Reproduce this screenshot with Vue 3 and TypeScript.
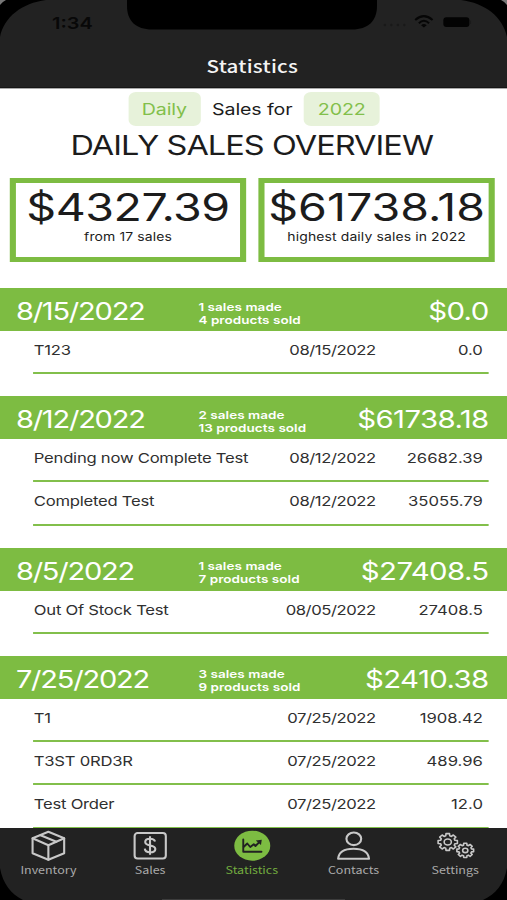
<script setup lang="ts">
interface Sale { name: string; date: string; value: string }
interface Day { date: string; sales: number; products: number; total: string; rows: Sale[] }

const days: Day[] = [
  { date: '8/15/2022', sales: 1, products: 4, total: '$0.0', rows: [{ name: 'T123', date: '08/15/2022', value: '0.0' }] },
  {
    date: '8/12/2022', sales: 2, products: 13, total: '$61738.18',
    rows: [
      { name: 'Pending now Complete Test', date: '08/12/2022', value: '26682.39' },
      { name: 'Completed Test', date: '08/12/2022', value: '35055.79' },
    ],
  },
  { date: '8/5/2022', sales: 1, products: 7, total: '$27408.5', rows: [{ name: 'Out Of Stock Test', date: '08/05/2022', value: '27408.5' }] },
  {
    date: '7/25/2022', sales: 3, products: 9, total: '$2410.38',
    rows: [
      { name: 'T1', date: '07/25/2022', value: '1908.42' },
      { name: 'T3ST 0RD3R', date: '07/25/2022', value: '489.96' },
      { name: 'Test Order', date: '07/25/2022', value: '12.0' },
    ],
  },
]

function gear(cx: number, cy: number, rx: number, ry: number): string {
  const teeth = 8
  const pts: string[] = []
  for (let i = 0; i < teeth; i++) {
    const base = (i * 2 * Math.PI) / teeth
    const steps: [number, number][] = [[-0.27, 0.76], [-0.18, 1], [0.18, 1], [0.27, 0.76]]
    for (const [da, r] of steps) {
      pts.push(`${(cx + Math.cos(base + da) * rx * r).toFixed(2)} ${(cy + Math.sin(base + da) * ry * r).toFixed(2)}`)
    }
  }
  return `M${pts.join('L')}Z`
}
const bigGear = gear(22.8, 14, 9.8, 8.5)
const smallGear = gear(40.3, 22.4, 8.5, 7.2)
</script>

<template>
  <div class="viewport">
    <div class="phone">
      <header class="header">
        <div class="status">
          <span class="clock">1:34</span>
          <svg class="status-icons" width="73.5" height="20" viewBox="0 0 90 20" preserveAspectRatio="none">
            <g fill="#191919">
              <circle cx="4" cy="13" r="1.2" /><circle cx="10.5" cy="13" r="1.2" /><circle cx="17" cy="13" r="1.2" /><circle cx="23.5" cy="13" r="1.2" />
            </g>
            <g fill="none" stroke="#060606" stroke-width="2">
              <path d="M34.3 8Q43 .2 51.700 8" /><path d="M38 11.200Q43 6.400 48.200 11.200" />
            </g>
            <path d="M40.200 13.200Q43 11 45.800 13.200L43 15.600Z" fill="#060606" />
            <rect x="62.500" y="5.300" width="26" height="9.600" rx="3" fill="#030303" />
            <path d="M89.700 8.500v3.500" stroke="#1a1a1a" />
          </svg>
        </div>
        <h1 class="screen-title">Statistics</h1>
      </header>

      <main class="content">
        <div class="filters">
          <button class="pill daily">Daily</button>
          <span class="between">Sales for</span>
          <button class="pill year">2022</button>
        </div>
        <h2 class="title">DAILY SALES OVERVIEW</h2>
        <div class="cards">
          <section class="card">
            <strong class="amount first">$4327.39</strong>
            <span class="note">from 17 sales</span>
          </section>
          <section class="card">
            <strong class="amount">$61738.18</strong>
            <span class="note">highest daily sales in 2022</span>
          </section>
        </div>
        <section v-for="d in days" :key="d.date" class="day">
          <div class="band">
            <span class="day-date">{{ d.date }}</span>
            <span class="counts">{{ d.sales }} sales made<br>{{ d.products }} products sold</span>
            <span class="total">{{ d.total }}</span>
          </div>
          <div v-for="r in d.rows" :key="r.name" class="row">
            <span class="name">{{ r.name }}</span>
            <span class="date">{{ r.date }}</span>
            <span class="value">{{ r.value }}</span>
          </div>
        </section>
      </main>

      <nav class="tabs">
        <div class="tab">
          <svg class="icon" viewBox="0 0 60 34" preserveAspectRatio="none">
            <g fill="none" stroke="#c8c8c8" stroke-width="2.100" stroke-linejoin="round" stroke-linecap="round">
              <path d="M30 3.800L45.800 10.300V25.300L30 31.800L14.200 25.300V10.300Z" />
              <path d="M14.200 10.300L30 17.200L45.800 10.300M30 17.200V31.800" />
              <path d="M22.200 7.200L38 13.700" />
            </g>
          </svg>
          <span class="label">Inventory</span>
        </div>
        <div class="tab">
          <svg class="icon" viewBox="0 0 60 34" preserveAspectRatio="none">
            <g fill="none" stroke="#c8c8c8" stroke-width="2.100">
              <rect x="14.600" y="5" width="31.200" height="25.500" rx="3" />
              <path d="M35 13.500C34.500 11.500 32.700 10.700 30 10.700C27 10.700 25.200 11.900 25.200 13.900C25.200 19 35.300 15.900 35.300 20.900C35.300 23 33 24.300 30 24.300C27 24.300 25 23 24.800 20.700M30 8.300V26.700" />
            </g>
          </svg>
          <span class="label">Sales</span>
        </div>
        <div class="tab active">
          <svg class="icon" viewBox="0 0 60 34" preserveAspectRatio="none">
            <ellipse cx="30.600" cy="17.700" rx="18" ry="15" fill="#7dbc42" />
            <g fill="none" stroke="#222" stroke-width="1.900" stroke-linecap="round" stroke-linejoin="round">
              <path d="M21.600 11.500V23.800H39.800" />
              <path d="M22.100 18.800L25.600 15.500L28.600 19L32.100 16.200L33.800 18L38.100 13.700" />
            </g>
            <path d="M34.100 12.400L40.100 11.800L39.300 17Z" fill="#222" />
          </svg>
          <span class="label">Statistics</span>
        </div>
        <div class="tab">
          <svg class="icon" viewBox="0 0 60 34" preserveAspectRatio="none">
            <g fill="none" stroke="#c8c8c8" stroke-width="2.100">
              <ellipse cx="30.500" cy="10.800" rx="7.400" ry="6.300" />
              <path d="M14.800 30.800C15.500 23.800 22 20.800 30.200 20.800C38.500 20.800 45 23.800 45.700 30.800Z" stroke-linejoin="round" />
            </g>
          </svg>
          <span class="label">Contacts</span>
        </div>
        <div class="tab">
          <svg class="icon" viewBox="0 0 60 34" preserveAspectRatio="none">
            <g fill="none" stroke="#c8c8c8" stroke-width="1.600" stroke-linejoin="round">
              <path :d="bigGear" /><ellipse cx="22.800" cy="14" rx="3.600" ry="3" />
              <path :d="smallGear" /><ellipse cx="40.300" cy="22.400" rx="2.600" ry="2.200" />
            </g>
          </svg>
          <span class="label">Settings</span>
        </div>
      </nav>

      <svg class="bezel" viewBox="0 0 507 900" preserveAspectRatio="none">
        <path d="M127 0H377V6C377 21 368 29.500 352 29.500H152C136 29.500 127 21 127 6Z" />
        <path d="M0 0H46C22 3 4 17 0 37Z" />
        <path d="M507 0H461C485 3 503 17 507 37Z" />
        <path d="M0 868C3 884 11 894 23 900H0Z" />
        <path d="M507 868C504 884 496 894 483 900H507Z" />
        <path d="M0 0H6Q2 2 0 5ZM507 0H501Q505 2 507 5Z" fill="#777" />
        <rect x="162" y="899" width="183" height="1" fill="#3c3c3c" />
      </svg>
    </div>
  </div>
</template>

<style>
body { background: #fff; overflow: hidden; }
</style>

<style scoped>
.viewport { width: 507px; height: 900px; overflow: hidden; }
/* The 414pt wide layout is stretched horizontally to fill the 507px window. */
.phone {
  position: relative; width: 414px; height: 900px; display: flex; flex-direction: column;
  transform: scaleX(1.22464); transform-origin: 0 0; background: #fff; color: #1c1c1c;
  font-family: Inter, "Liberation Sans", sans-serif;
}
.header { height: 88px; flex: none; box-sizing: border-box; background: #222; border-bottom: 1px solid #161616; display: flex; flex-direction: column; }
.status { height: 48px; display: flex; justify-content: space-between; padding: 12px 29.500px 0 42.500px; box-sizing: border-box; }
.clock { font-size: 16.300px; line-height: 22px; font-weight: 600; color: #080808; }
.screen-title { margin: 6px 0 0; text-align: center; font: 500 16.800px/24px "Noto Sans CJK SC", sans-serif; letter-spacing: .2px; color: #f4f4f4; padding-right: 2px; }
.content { flex: 1; min-height: 0; overflow: hidden; display: flex; flex-direction: column; border-top: 1px solid #aaa; }
.filters { display: flex; align-items: center; height: 34px; margin-top: 3px; padding-left: 104.500px; flex: none; font-size: 16px; letter-spacing: -.1px; }
.pill { border: 0; padding: 0; height: 34px; border-radius: 6px; background: #e7f2da; color: #82bf4b; font: 400 16px/34px Inter, sans-serif; letter-spacing: -.1px; }
.daily { width: 59.500px; }
.year { width: 62px; }
.between { width: 84px; text-align: center; }
.title { margin: 1px 0 0; height: 36px; flex: none; padding-right: 3px; text-align: center; font-size: 26.500px; line-height: 36px; font-weight: 400; letter-spacing: -.77px; white-space: nowrap; }
.cards { display: grid; grid-template-columns: 193.500px 193.500px; gap: 9.500px; padding-left: 7.800px; margin-top: 14.500px; flex: none; }
.card { height: 84px; box-sizing: border-box; border: 5px solid #7dbc42; display: flex; flex-direction: column; align-items: center; white-space: nowrap; }
.amount { font-size: 38px; line-height: 46px; font-weight: 400; margin-top: 1px; }
.first { letter-spacing: -.4px; }
.note { font-size: 11.400px; line-height: 15px; letter-spacing: .1px; }
.day { flex: none; margin-bottom: 21.800px; }
.cards + .day { margin-top: 26.500px; }
.band { height: 43px; background: #7dbc42; color: #fff; display: grid; grid-template-columns: 149px 1fr auto; align-items: center; padding: 0 15px 0 13px; }
.day-date, .total { font-size: 24px; line-height: 43px; padding-top: 2px; letter-spacing: -.5px; }
.day-date { font-size: 23.700px; letter-spacing: -1px; }
.counts { font-size: 11px; line-height: 13px; font-weight: 600; padding-top: 6px; letter-spacing: .05px; white-space: nowrap; }
.row { height: 43.350px; box-sizing: border-box; border-bottom: 2px solid #82bf4b; margin: 0 14.700px 0 27px; display: grid; grid-template-columns: 1fr auto 87.500px; padding-right: 5px; padding-left: .6px; font-size: 13.600px; line-height: 39px; color: #303030; white-space: nowrap; }
.name { letter-spacing: -.2px; }
.date { letter-spacing: -.35px; }
.value { text-align: right; }
.tabs { height: 72px; flex: none; background: #222; display: flex; margin: 0 .8px 0 -2px; box-shadow: 2px 0 0 #222; }
.tab { flex: 1; display: flex; flex-direction: column; align-items: center; color: #aaa; }
.icon { width: 49px; height: 34px; display: block; }
.label { font: 400 10.200px/15px "Noto Sans CJK SC", sans-serif; }
.active .label { color: #72ac3f; }
.bezel { position: absolute; inset: 0; width: 414px; height: 900px; pointer-events: none; }
</style>
